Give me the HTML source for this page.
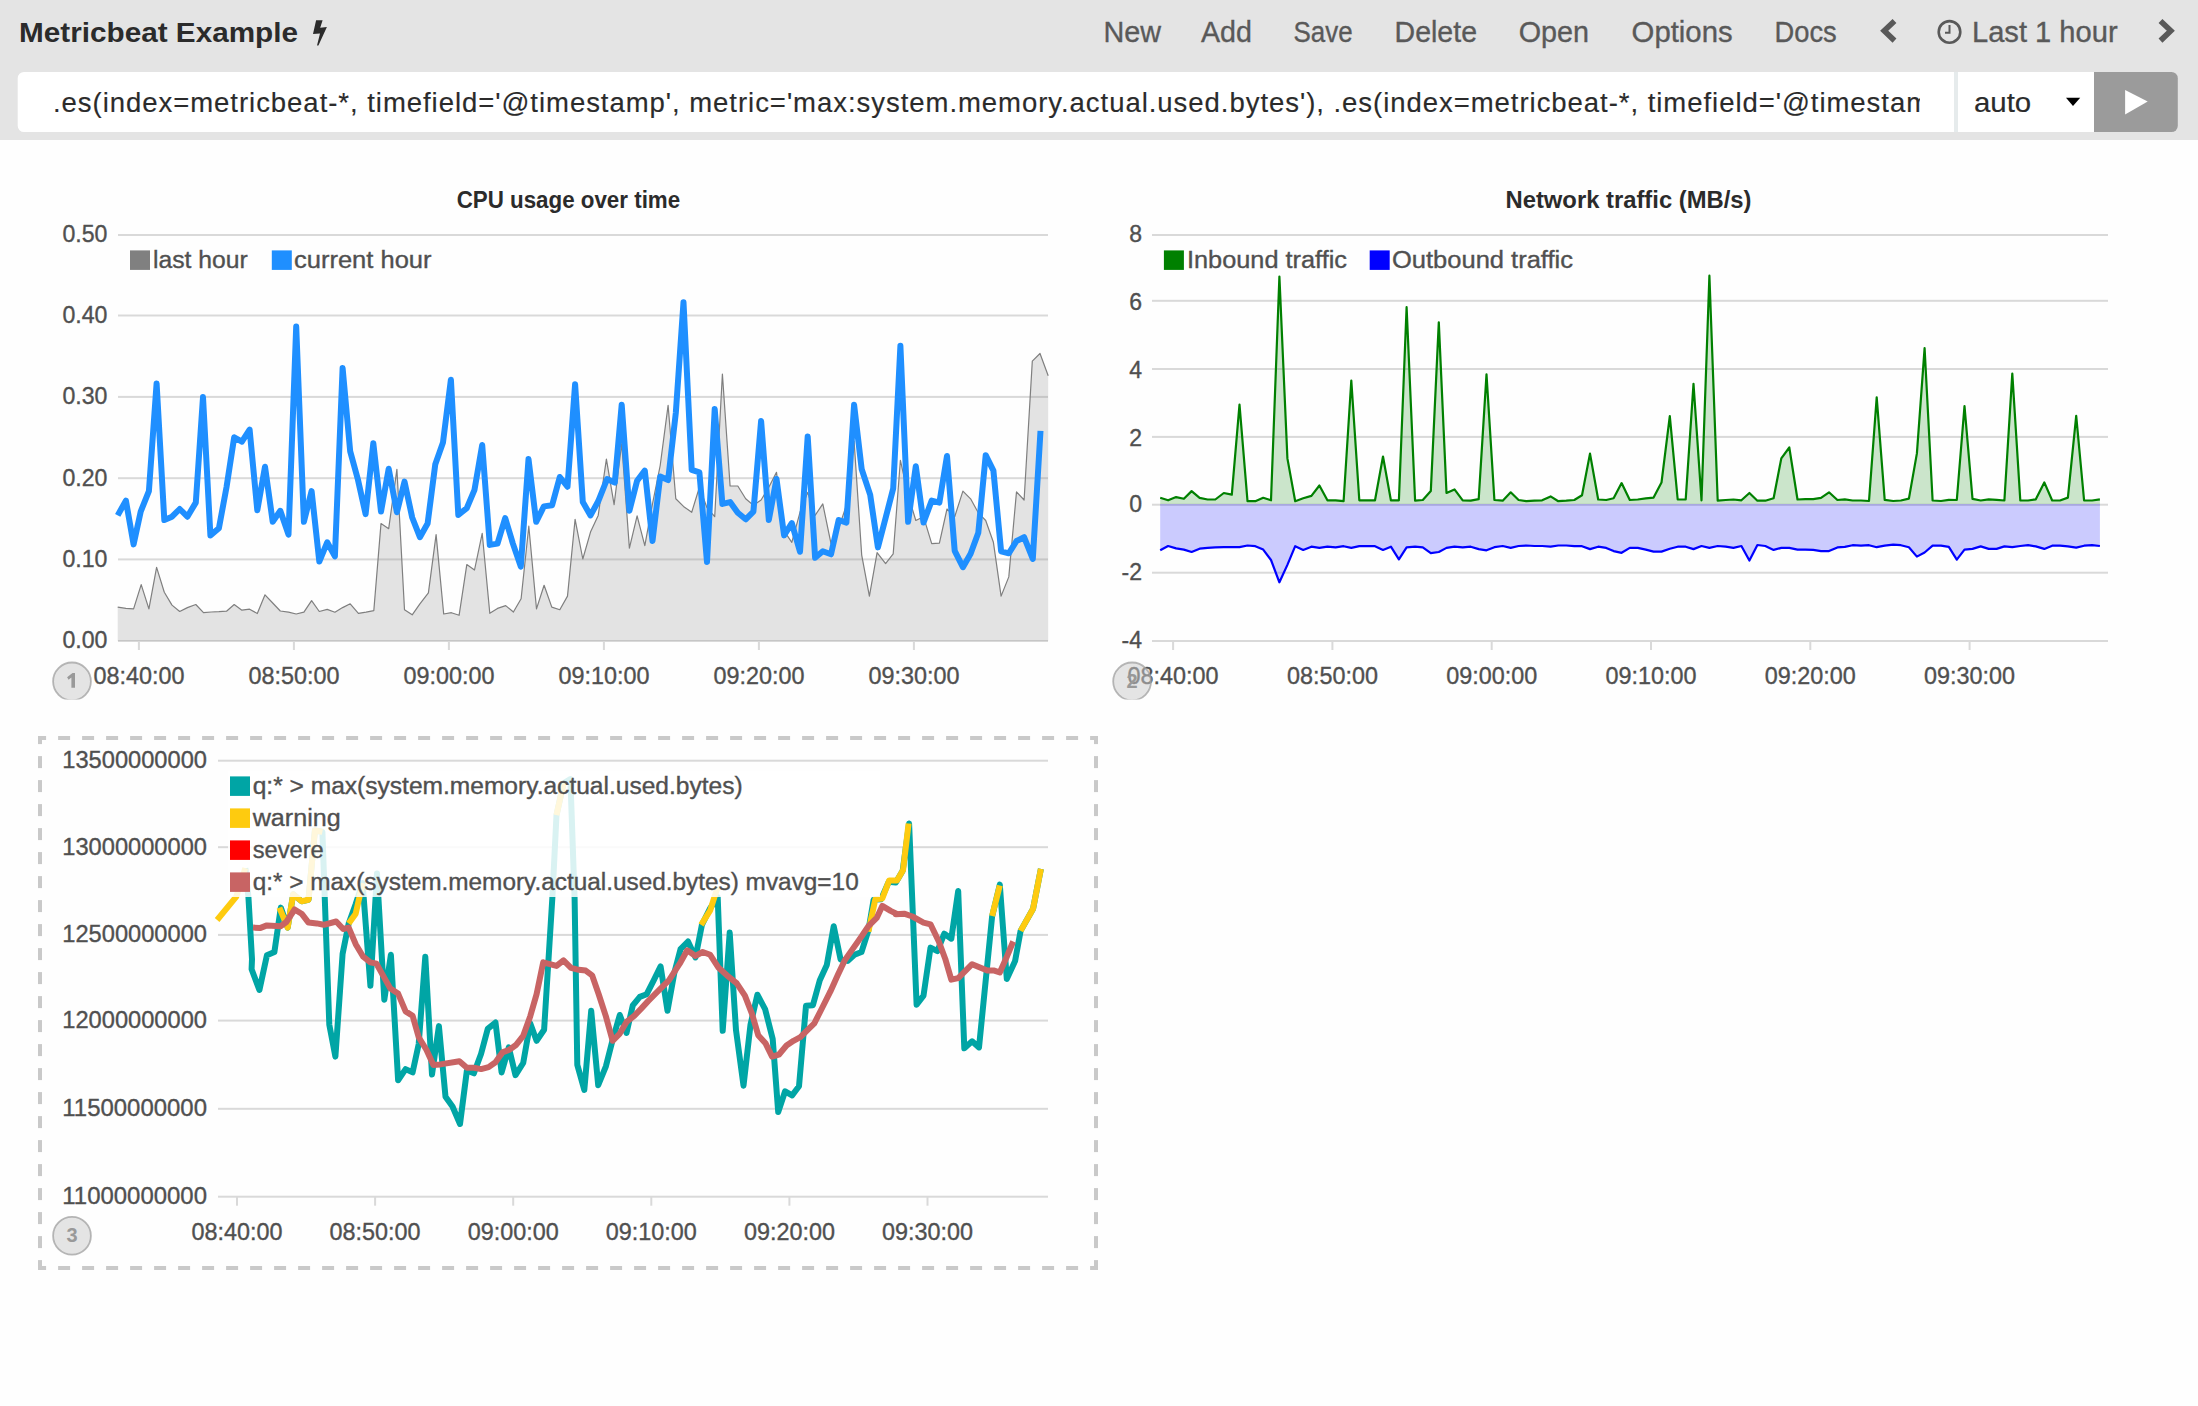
<!DOCTYPE html>
<html><head><meta charset="utf-8"><title>Timelion</title>
<style>
html,body{margin:0;padding:0;background:#fefefe;width:2198px;height:1406px;overflow:hidden;position:relative}
svg{display:block;font-family:"Liberation Sans", sans-serif}
</style></head><body>
<svg width="2198" height="1406" viewBox="0 0 2198 1406">
<rect x="0" y="0" width="2198" height="140" fill="#e4e4e4"/>
<text x="19" y="42" font-size="28" font-weight="bold" fill="#2b2b2b" text-anchor="start" textLength="279" lengthAdjust="spacingAndGlyphs">Metricbeat Example</text>
<polygon points="316.1,20.2 322.6,20.2 320.2,27.8 326.9,27.0 318.4,45.6 317.0,45.6 320.0,33.6 313.0,33.9" fill="#2b2b2b"/>
<text x="1103.4" y="42" font-size="29.5" font-weight="normal" fill="#595959" text-anchor="start" textLength="57.6" lengthAdjust="spacingAndGlyphs" stroke="#595959" stroke-width="0.35">New</text>
<text x="1201" y="42" font-size="29.5" font-weight="normal" fill="#595959" text-anchor="start" textLength="51" lengthAdjust="spacingAndGlyphs" stroke="#595959" stroke-width="0.35">Add</text>
<text x="1293.5" y="42" font-size="29.5" font-weight="normal" fill="#595959" text-anchor="start" textLength="59.1" lengthAdjust="spacingAndGlyphs" stroke="#595959" stroke-width="0.35">Save</text>
<text x="1394.6" y="42" font-size="29.5" font-weight="normal" fill="#595959" text-anchor="start" textLength="82.4" lengthAdjust="spacingAndGlyphs" stroke="#595959" stroke-width="0.35">Delete</text>
<text x="1518.7" y="42" font-size="29.5" font-weight="normal" fill="#595959" text-anchor="start" textLength="70.3" lengthAdjust="spacingAndGlyphs" stroke="#595959" stroke-width="0.35">Open</text>
<text x="1631.6" y="42" font-size="29.5" font-weight="normal" fill="#595959" text-anchor="start" textLength="101" lengthAdjust="spacingAndGlyphs" stroke="#595959" stroke-width="0.35">Options</text>
<text x="1774.5" y="42" font-size="29.5" font-weight="normal" fill="#595959" text-anchor="start" textLength="62.2" lengthAdjust="spacingAndGlyphs" stroke="#595959" stroke-width="0.35">Docs</text>
<text x="1972" y="42" font-size="29.5" font-weight="normal" fill="#595959" text-anchor="start" textLength="145.6" lengthAdjust="spacingAndGlyphs" stroke="#595959" stroke-width="0.35">Last 1 hour</text>
<polyline points="1894.5,21 1884.2,30.8 1894.5,40.6" fill="none" stroke="#595959" stroke-width="5.6" stroke-linecap="butt" stroke-linejoin="miter"/>
<polyline points="2160.5,21 2170.8,30.8 2160.5,40.6" fill="none" stroke="#595959" stroke-width="5.6" stroke-linecap="butt" stroke-linejoin="miter"/>
<circle cx="1949.5" cy="31.9" r="10.8" fill="none" stroke="#595959" stroke-width="2.6"/>
<polyline points="1949.5,25 1949.5,32.8 1945,32.8" fill="none" stroke="#595959" stroke-width="2"/>
<path d="M24,72 H1954 V132 H24 A6.3,6.3 0 0 1 17.7,125.7 V78.3 A6.3,6.3 0 0 1 24,72 Z" fill="#fff"/>
<rect x="1954" y="72" width="4" height="60" fill="#e6ebec"/>
<rect x="1958" y="72" width="136" height="60" fill="#fff"/>
<path d="M2094,72 H2171.5 A6.3,6.3 0 0 1 2177.8,78.3 V125.7 A6.3,6.3 0 0 1 2171.5,132 H2094 Z" fill="#9b9b9b"/>
<polygon points="2125.1,90 2147.7,101.6 2125.1,114.4" fill="#fff"/>
<polygon points="2066,97.7 2080.2,97.7 2073,105.9" fill="#000"/>
<text x="1973.9" y="111.7" font-size="27.5" font-weight="normal" fill="#2b2b2b" text-anchor="start" textLength="57.3" lengthAdjust="spacingAndGlyphs" stroke="#2b2b2b" stroke-width="0.15">auto</text>
<clipPath id="inclip"><rect x="18" y="72" width="1902" height="60"/></clipPath>
<text x="53" y="111.6" font-size="27.5" font-weight="normal" fill="#2b2b2b" text-anchor="start" stroke="#2b2b2b" stroke-width="0.15" clip-path="url(#inclip)" letter-spacing="0.96">.es(index=metricbeat-*, timefield='@timestamp', metric='max:system.memory.actual.used.bytes'), .es(index=metricbeat-*, timefield='@timestamp'</text>
<text x="568.4" y="208" font-size="23.5" font-weight="bold" fill="#2b2b2b" text-anchor="middle" textLength="223.5" lengthAdjust="spacingAndGlyphs">CPU usage over time</text>
<rect x="118" y="640.0" width="930" height="2" fill="#d9d9d9"/>
<text x="107.4" y="648.4" font-size="23" font-weight="normal" fill="#505050" text-anchor="end" textLength="45" lengthAdjust="spacingAndGlyphs" stroke="#505050" stroke-width="0.35">0.00</text>
<rect x="118" y="558.4" width="930" height="2" fill="#d9d9d9"/>
<text x="107.4" y="566.8" font-size="23" font-weight="normal" fill="#505050" text-anchor="end" textLength="45" lengthAdjust="spacingAndGlyphs" stroke="#505050" stroke-width="0.35">0.10</text>
<rect x="118" y="477.2" width="930" height="2" fill="#d9d9d9"/>
<text x="107.4" y="485.59999999999997" font-size="23" font-weight="normal" fill="#505050" text-anchor="end" textLength="45" lengthAdjust="spacingAndGlyphs" stroke="#505050" stroke-width="0.35">0.20</text>
<rect x="118" y="395.9" width="930" height="2" fill="#d9d9d9"/>
<text x="107.4" y="404.29999999999995" font-size="23" font-weight="normal" fill="#505050" text-anchor="end" textLength="45" lengthAdjust="spacingAndGlyphs" stroke="#505050" stroke-width="0.35">0.30</text>
<rect x="118" y="314.5" width="930" height="2" fill="#d9d9d9"/>
<text x="107.4" y="322.9" font-size="23" font-weight="normal" fill="#505050" text-anchor="end" textLength="45" lengthAdjust="spacingAndGlyphs" stroke="#505050" stroke-width="0.35">0.40</text>
<rect x="118" y="234.0" width="930" height="2" fill="#d9d9d9"/>
<text x="107.4" y="242.4" font-size="23" font-weight="normal" fill="#505050" text-anchor="end" textLength="45" lengthAdjust="spacingAndGlyphs" stroke="#505050" stroke-width="0.35">0.50</text>
<rect x="137.9" y="641" width="2" height="9" fill="#d9d9d9"/>
<text x="138.9" y="684.1" font-size="23.8" font-weight="normal" fill="#505050" text-anchor="middle" textLength="91" lengthAdjust="spacingAndGlyphs" stroke="#505050" stroke-width="0.35">08:40:00</text>
<rect x="292.9" y="641" width="2" height="9" fill="#d9d9d9"/>
<text x="293.9" y="684.1" font-size="23.8" font-weight="normal" fill="#505050" text-anchor="middle" textLength="91" lengthAdjust="spacingAndGlyphs" stroke="#505050" stroke-width="0.35">08:50:00</text>
<rect x="447.9" y="641" width="2" height="9" fill="#d9d9d9"/>
<text x="448.9" y="684.1" font-size="23.8" font-weight="normal" fill="#505050" text-anchor="middle" textLength="91" lengthAdjust="spacingAndGlyphs" stroke="#505050" stroke-width="0.35">09:00:00</text>
<rect x="602.9" y="641" width="2" height="9" fill="#d9d9d9"/>
<text x="603.9" y="684.1" font-size="23.8" font-weight="normal" fill="#505050" text-anchor="middle" textLength="91" lengthAdjust="spacingAndGlyphs" stroke="#505050" stroke-width="0.35">09:10:00</text>
<rect x="757.9" y="641" width="2" height="9" fill="#d9d9d9"/>
<text x="758.9" y="684.1" font-size="23.8" font-weight="normal" fill="#505050" text-anchor="middle" textLength="91" lengthAdjust="spacingAndGlyphs" stroke="#505050" stroke-width="0.35">09:20:00</text>
<rect x="912.9" y="641" width="2" height="9" fill="#d9d9d9"/>
<text x="913.9" y="684.1" font-size="23.8" font-weight="normal" fill="#505050" text-anchor="middle" textLength="91" lengthAdjust="spacingAndGlyphs" stroke="#505050" stroke-width="0.35">09:30:00</text>
<polygon points="117.7,641 117.7,607.1 125.9,608.4 133.6,608.9 141.2,584.6 148.9,608.9 156.6,567.4 164.3,592.3 172.0,605.1 179.7,611.5 187.4,607.6 195.8,604.5 203.5,612.7 211.2,612.0 218.9,611.7 226.5,611.2 234.2,604.5 241.9,610.2 249.6,609.2 257.3,613.5 265.0,594.8 272.7,603.0 280.3,611.0 288.5,612.2 296.2,614.0 303.9,612.2 311.6,600.7 319.3,611.5 327.2,609.4 334.9,612.2 342.6,607.6 350.2,603.8 358.4,613.3 366.1,612.2 373.8,610.7 381.0,523.6 388.7,528.7 396.9,469.3 404.5,609.7 412.2,614.8 419.9,603.8 428.4,592.8 436.1,534.6 443.7,614.0 451.4,612.7 459.1,615.3 466.8,564.6 474.5,570.0 482.2,533.3 489.8,613.3 497.5,608.4 505.7,605.6 513.4,612.0 521.1,598.7 528.8,526.2 536.5,608.9 544.1,585.3 551.8,607.1 559.8,609.7 567.5,596.1 575.1,519.3 582.8,559.0 590.5,532.1 598.2,515.4 606.4,459.1 614.1,504.7 621.7,443.7 629.4,548.2 637.1,515.9 644.8,545.6 652.5,503.9 660.2,465.5 668.1,405.3 675.8,498.8 683.5,506.4 691.7,512.3 699.4,487.2 707.0,507.7 714.7,516.7 722.4,374.0 730.1,486.0 737.8,486.0 745.7,498.8 753.4,505.2 761.1,500.0 768.8,487.2 776.5,472.4 784.1,530.8 791.8,542.3 800.0,512.3 807.7,492.4 815.1,515.4 822.8,503.9 831.0,543.6 838.7,528.2 846.4,505.2 854.1,441.1 861.7,555.1 869.4,596.1 877.1,552.6 885.6,563.6 893.2,553.8 900.4,460.3 908.1,494.9 915.8,520.5 923.5,516.7 931.7,543.6 939.4,543.1 947.0,509.0 954.7,516.7 962.9,491.1 970.6,498.8 978.3,512.8 985.7,520.5 993.4,542.3 1001.1,596.1 1008.8,576.9 1016.5,491.8 1024.1,500.0 1032.3,361.2 1040.0,353.5 1048.2,375.8 1048.2,641" fill="#808080" fill-opacity="0.21"/>
<polyline points="117.7,607.1 125.9,608.4 133.6,608.9 141.2,584.6 148.9,608.9 156.6,567.4 164.3,592.3 172.0,605.1 179.7,611.5 187.4,607.6 195.8,604.5 203.5,612.7 211.2,612.0 218.9,611.7 226.5,611.2 234.2,604.5 241.9,610.2 249.6,609.2 257.3,613.5 265.0,594.8 272.7,603.0 280.3,611.0 288.5,612.2 296.2,614.0 303.9,612.2 311.6,600.7 319.3,611.5 327.2,609.4 334.9,612.2 342.6,607.6 350.2,603.8 358.4,613.3 366.1,612.2 373.8,610.7 381.0,523.6 388.7,528.7 396.9,469.3 404.5,609.7 412.2,614.8 419.9,603.8 428.4,592.8 436.1,534.6 443.7,614.0 451.4,612.7 459.1,615.3 466.8,564.6 474.5,570.0 482.2,533.3 489.8,613.3 497.5,608.4 505.7,605.6 513.4,612.0 521.1,598.7 528.8,526.2 536.5,608.9 544.1,585.3 551.8,607.1 559.8,609.7 567.5,596.1 575.1,519.3 582.8,559.0 590.5,532.1 598.2,515.4 606.4,459.1 614.1,504.7 621.7,443.7 629.4,548.2 637.1,515.9 644.8,545.6 652.5,503.9 660.2,465.5 668.1,405.3 675.8,498.8 683.5,506.4 691.7,512.3 699.4,487.2 707.0,507.7 714.7,516.7 722.4,374.0 730.1,486.0 737.8,486.0 745.7,498.8 753.4,505.2 761.1,500.0 768.8,487.2 776.5,472.4 784.1,530.8 791.8,542.3 800.0,512.3 807.7,492.4 815.1,515.4 822.8,503.9 831.0,543.6 838.7,528.2 846.4,505.2 854.1,441.1 861.7,555.1 869.4,596.1 877.1,552.6 885.6,563.6 893.2,553.8 900.4,460.3 908.1,494.9 915.8,520.5 923.5,516.7 931.7,543.6 939.4,543.1 947.0,509.0 954.7,516.7 962.9,491.1 970.6,498.8 978.3,512.8 985.7,520.5 993.4,542.3 1001.1,596.1 1008.8,576.9 1016.5,491.8 1024.1,500.0 1032.3,361.2 1040.0,353.5 1048.2,375.8" fill="none" stroke="#7f7f7f" stroke-width="1.2" stroke-linejoin="round"/>
<polyline points="117.7,515.4 125.9,500.6 133.6,544.4 140.7,511.6 148.9,491.1 156.6,383.5 164.3,520.0 172.0,516.7 179.7,509.0 187.4,516.7 195.8,502.6 203.0,397.1 210.4,535.4 218.9,528.2 226.5,487.2 234.2,437.3 241.9,441.6 249.6,429.6 257.3,510.3 265.0,466.7 272.7,521.8 280.3,510.8 288.5,534.6 296.2,326.6 303.9,521.8 311.6,491.1 319.3,561.5 327.2,542.3 334.9,556.4 342.6,368.1 350.2,451.4 357.9,479.5 365.6,514.1 373.3,443.2 381.0,511.6 388.7,468.8 396.9,512.3 404.5,481.6 412.2,517.5 419.9,537.2 427.6,523.6 435.3,464.2 443.0,442.4 450.9,379.7 458.3,514.9 466.8,508.2 474.5,489.8 482.2,445.0 489.8,544.9 497.5,543.6 505.2,518.0 512.9,543.6 520.8,566.6 528.5,459.1 536.2,521.8 543.9,506.4 552.1,505.2 559.8,477.0 567.5,486.7 575.1,384.3 582.8,502.1 590.5,515.4 598.2,501.3 607.1,479.0 614.8,482.6 621.7,404.8 629.4,510.8 637.1,480.8 644.8,470.6 652.5,541.0 660.2,476.5 668.1,480.1 675.8,413.0 683.5,302.3 691.7,469.8 699.4,472.4 707.0,562.0 714.7,409.1 722.4,503.9 730.1,502.1 737.8,512.8 745.7,519.3 753.4,511.6 761.1,421.1 768.8,520.0 776.5,479.0 784.1,535.4 791.8,523.1 800.0,551.8 807.7,436.5 815.1,557.7 822.8,551.3 831.0,554.3 838.7,520.0 846.4,522.6 854.1,404.8 861.7,469.3 870.2,494.9 877.9,547.4 885.6,518.0 893.2,488.5 900.4,345.8 908.1,521.8 915.8,466.2 923.5,522.6 931.7,500.6 939.4,502.6 947.0,456.0 954.7,550.8 962.9,567.2 970.6,553.8 978.3,532.8 985.7,455.2 993.4,470.6 1001.1,551.3 1008.8,553.3 1016.5,541.0 1024.1,537.2 1032.8,559.0 1040.5,430.9" fill="none" stroke="#1f8fff" stroke-width="6" stroke-linejoin="round" stroke-linecap="butt"/>
<rect x="130" y="250.4" width="20" height="19.5" fill="#808080"/>
<text x="153" y="268" font-size="23" font-weight="normal" fill="#505050" text-anchor="start" textLength="94.7" lengthAdjust="spacingAndGlyphs" stroke="#505050" stroke-width="0.35">last hour</text>
<rect x="271.8" y="250.4" width="20" height="19.5" fill="#1f8fff"/>
<text x="294" y="268" font-size="23" font-weight="normal" fill="#505050" text-anchor="start" textLength="137.5" lengthAdjust="spacingAndGlyphs" stroke="#505050" stroke-width="0.35">current hour</text>
<clipPath id="bc1"><rect x="42" y="651.4" width="60" height="48.10000000000002"/></clipPath>
<g clip-path="url(#bc1)"><circle cx="72" cy="681.4" r="18.9" fill="#cacaca" fill-opacity="0.5" stroke="#a0a0a0" stroke-opacity="0.75" stroke-width="1.8"/>
<polygon points="72.5,673.0 75,673.0 75,687.8 71.4,687.8 71.4,677.5 68.6,679.8 67.1,677.1999999999999" fill="#999"/>
</g>
<text x="1628.5" y="208" font-size="23.5" font-weight="bold" fill="#2b2b2b" text-anchor="middle" textLength="246" lengthAdjust="spacingAndGlyphs">Network traffic (MB/s)</text>
<rect x="1152" y="234.0" width="956" height="2" fill="#d9d9d9"/>
<text x="1142" y="241.9" font-size="23" font-weight="normal" fill="#505050" text-anchor="end" stroke="#505050" stroke-width="0.35">8</text>
<rect x="1152" y="299.8" width="956" height="2" fill="#d9d9d9"/>
<text x="1142" y="310.2" font-size="23" font-weight="normal" fill="#505050" text-anchor="end" stroke="#505050" stroke-width="0.35">6</text>
<rect x="1152" y="368.0" width="956" height="2" fill="#d9d9d9"/>
<text x="1142" y="377.6" font-size="23" font-weight="normal" fill="#505050" text-anchor="end" stroke="#505050" stroke-width="0.35">4</text>
<rect x="1152" y="435.9" width="956" height="2" fill="#d9d9d9"/>
<text x="1142" y="445.5" font-size="23" font-weight="normal" fill="#505050" text-anchor="end" stroke="#505050" stroke-width="0.35">2</text>
<rect x="1152" y="503.7" width="956" height="2" fill="#d9d9d9"/>
<text x="1142" y="511.9" font-size="23" font-weight="normal" fill="#505050" text-anchor="end" stroke="#505050" stroke-width="0.35">0</text>
<rect x="1152" y="571.7" width="956" height="2" fill="#d9d9d9"/>
<text x="1142" y="579.8" font-size="23" font-weight="normal" fill="#505050" text-anchor="end" stroke="#505050" stroke-width="0.35">-2</text>
<rect x="1152" y="640.0" width="956" height="2" fill="#d9d9d9"/>
<text x="1142" y="647.6" font-size="23" font-weight="normal" fill="#505050" text-anchor="end" stroke="#505050" stroke-width="0.35">-4</text>
<polygon points="1160.2,504.7 1160.2,497.8 1168.1,500.3 1176.1,497.1 1183.9,498.8 1191.6,491.1 1199.6,497.8 1207.6,499.5 1215.3,499.5 1223.8,493.0 1231.8,494.7 1239.5,404.7 1247.5,501.2 1255.3,501.2 1263.2,497.8 1271.0,500.3 1279.4,276.5 1287.4,458.4 1295.2,501.2 1303.2,498.3 1311.4,495.9 1319.4,485.5 1327.4,500.3 1335.6,500.3 1343.6,501.2 1351.3,380.5 1359.3,500.3 1367.0,500.3 1375.0,500.3 1383.0,456.5 1390.9,500.3 1398.9,500.3 1406.6,307.2 1415.1,500.7 1422.8,500.0 1430.8,491.1 1438.8,322.4 1446.5,493.0 1454.5,489.4 1462.7,500.3 1470.7,500.7 1478.7,499.1 1486.5,374.4 1494.4,500.0 1502.7,500.7 1510.7,492.3 1518.6,500.0 1526.4,501.2 1534.4,500.7 1542.1,500.3 1550.6,496.4 1558.3,501.2 1566.3,500.7 1574.3,500.0 1582.0,495.2 1590.0,453.6 1598.2,499.5 1606.2,500.0 1613.6,498.3 1621.6,483.1 1629.8,500.0 1637.8,499.5 1645.8,498.3 1653.6,497.6 1661.5,482.6 1669.8,416.1 1677.7,499.5 1685.7,499.5 1693.5,383.9 1701.5,500.3 1709.4,275.7 1717.7,500.7 1725.7,500.0 1733.4,499.5 1741.4,500.3 1749.4,493.0 1757.4,500.7 1765.3,500.7 1773.6,498.3 1781.3,458.4 1789.3,447.5 1797.5,499.5 1805.3,499.1 1813.2,499.1 1821.0,497.8 1829.0,492.3 1837.4,500.0 1844.8,499.3 1852.6,500.5 1861.0,500.5 1869.0,501.0 1876.7,397.3 1884.7,499.8 1893.2,501.0 1900.9,500.5 1908.9,498.6 1916.9,453.4 1924.6,348.2 1932.6,500.5 1941.0,501.0 1948.8,499.8 1956.8,500.0 1964.5,406.2 1972.5,498.8 1980.7,500.5 1988.7,499.3 1996.6,499.8 2004.4,500.5 2012.3,373.6 2020.3,500.5 2028.1,500.5 2035.8,499.3 2044.3,482.4 2052.2,500.5 2060.0,500.5 2067.9,497.6 2076.2,415.9 2084.1,500.5 2092.1,500.5 2099.9,499.3 2099.9,504.7" fill="#008000" fill-opacity="0.2"/>
<polygon points="1160.2,504.7 1160.2,550.3 1168.1,546.0 1176.1,548.4 1183.9,549.6 1191.6,552.0 1199.6,548.7 1207.6,547.9 1215.3,547.4 1223.8,547.2 1231.8,547.2 1239.5,547.2 1247.5,545.5 1255.3,546.2 1263.2,549.6 1271.0,560.0 1279.4,582.3 1287.4,564.9 1295.2,546.2 1303.2,549.9 1311.4,546.7 1319.4,547.9 1327.4,546.7 1335.6,547.4 1343.6,546.2 1351.3,547.9 1359.3,546.2 1367.0,546.2 1375.0,546.2 1383.0,549.9 1390.9,546.7 1398.9,559.3 1406.6,547.4 1415.1,546.7 1422.8,547.4 1430.8,553.2 1438.8,552.0 1446.5,547.9 1454.5,546.7 1462.7,547.4 1470.7,546.7 1478.7,549.1 1486.5,550.3 1494.4,547.2 1502.7,546.0 1510.7,547.9 1518.6,546.0 1526.4,545.5 1534.4,546.0 1542.1,546.0 1550.6,546.7 1558.3,545.5 1566.3,545.5 1574.3,546.2 1582.0,546.2 1590.0,549.1 1598.2,546.7 1606.2,547.9 1613.6,551.1 1621.6,552.8 1629.8,547.9 1637.8,547.9 1645.8,549.6 1653.6,551.6 1661.5,551.6 1669.8,548.7 1677.7,546.7 1685.7,546.7 1693.5,549.1 1701.5,546.0 1709.4,547.9 1717.7,546.0 1725.7,546.7 1733.4,547.9 1741.4,546.0 1749.4,560.5 1757.4,545.0 1765.3,546.0 1773.6,549.9 1781.3,547.9 1789.3,547.9 1797.5,549.6 1805.3,549.6 1813.2,549.9 1821.0,551.1 1829.0,551.1 1837.4,547.4 1844.8,546.9 1852.6,545.2 1861.0,545.7 1869.0,545.2 1876.7,547.2 1884.7,545.7 1893.2,544.7 1900.9,545.2 1908.9,547.2 1916.9,556.6 1924.6,552.5 1932.6,545.7 1941.0,545.7 1948.8,546.9 1956.8,559.7 1964.5,549.6 1972.5,548.9 1980.7,546.4 1988.7,548.9 1996.6,548.9 2004.4,546.4 2012.3,547.2 2020.3,546.0 2028.1,545.2 2035.8,546.4 2044.3,548.9 2052.2,545.7 2060.0,545.7 2067.9,546.4 2076.2,547.6 2084.1,545.7 2092.1,545.2 2099.9,546.0 2099.9,504.7" fill="#0000ff" fill-opacity="0.2"/>
<line x1="1160.2" y1="504.7" x2="2099.9" y2="504.7" stroke="#a8a8e0" stroke-width="1.5"/>
<polyline points="1160.2,497.8 1168.1,500.3 1176.1,497.1 1183.9,498.8 1191.6,491.1 1199.6,497.8 1207.6,499.5 1215.3,499.5 1223.8,493.0 1231.8,494.7 1239.5,404.7 1247.5,501.2 1255.3,501.2 1263.2,497.8 1271.0,500.3 1279.4,276.5 1287.4,458.4 1295.2,501.2 1303.2,498.3 1311.4,495.9 1319.4,485.5 1327.4,500.3 1335.6,500.3 1343.6,501.2 1351.3,380.5 1359.3,500.3 1367.0,500.3 1375.0,500.3 1383.0,456.5 1390.9,500.3 1398.9,500.3 1406.6,307.2 1415.1,500.7 1422.8,500.0 1430.8,491.1 1438.8,322.4 1446.5,493.0 1454.5,489.4 1462.7,500.3 1470.7,500.7 1478.7,499.1 1486.5,374.4 1494.4,500.0 1502.7,500.7 1510.7,492.3 1518.6,500.0 1526.4,501.2 1534.4,500.7 1542.1,500.3 1550.6,496.4 1558.3,501.2 1566.3,500.7 1574.3,500.0 1582.0,495.2 1590.0,453.6 1598.2,499.5 1606.2,500.0 1613.6,498.3 1621.6,483.1 1629.8,500.0 1637.8,499.5 1645.8,498.3 1653.6,497.6 1661.5,482.6 1669.8,416.1 1677.7,499.5 1685.7,499.5 1693.5,383.9 1701.5,500.3 1709.4,275.7 1717.7,500.7 1725.7,500.0 1733.4,499.5 1741.4,500.3 1749.4,493.0 1757.4,500.7 1765.3,500.7 1773.6,498.3 1781.3,458.4 1789.3,447.5 1797.5,499.5 1805.3,499.1 1813.2,499.1 1821.0,497.8 1829.0,492.3 1837.4,500.0 1844.8,499.3 1852.6,500.5 1861.0,500.5 1869.0,501.0 1876.7,397.3 1884.7,499.8 1893.2,501.0 1900.9,500.5 1908.9,498.6 1916.9,453.4 1924.6,348.2 1932.6,500.5 1941.0,501.0 1948.8,499.8 1956.8,500.0 1964.5,406.2 1972.5,498.8 1980.7,500.5 1988.7,499.3 1996.6,499.8 2004.4,500.5 2012.3,373.6 2020.3,500.5 2028.1,500.5 2035.8,499.3 2044.3,482.4 2052.2,500.5 2060.0,500.5 2067.9,497.6 2076.2,415.9 2084.1,500.5 2092.1,500.5 2099.9,499.3" fill="none" stroke="#008000" stroke-width="2.2" stroke-linejoin="round"/>
<polyline points="1160.2,550.3 1168.1,546.0 1176.1,548.4 1183.9,549.6 1191.6,552.0 1199.6,548.7 1207.6,547.9 1215.3,547.4 1223.8,547.2 1231.8,547.2 1239.5,547.2 1247.5,545.5 1255.3,546.2 1263.2,549.6 1271.0,560.0 1279.4,582.3 1287.4,564.9 1295.2,546.2 1303.2,549.9 1311.4,546.7 1319.4,547.9 1327.4,546.7 1335.6,547.4 1343.6,546.2 1351.3,547.9 1359.3,546.2 1367.0,546.2 1375.0,546.2 1383.0,549.9 1390.9,546.7 1398.9,559.3 1406.6,547.4 1415.1,546.7 1422.8,547.4 1430.8,553.2 1438.8,552.0 1446.5,547.9 1454.5,546.7 1462.7,547.4 1470.7,546.7 1478.7,549.1 1486.5,550.3 1494.4,547.2 1502.7,546.0 1510.7,547.9 1518.6,546.0 1526.4,545.5 1534.4,546.0 1542.1,546.0 1550.6,546.7 1558.3,545.5 1566.3,545.5 1574.3,546.2 1582.0,546.2 1590.0,549.1 1598.2,546.7 1606.2,547.9 1613.6,551.1 1621.6,552.8 1629.8,547.9 1637.8,547.9 1645.8,549.6 1653.6,551.6 1661.5,551.6 1669.8,548.7 1677.7,546.7 1685.7,546.7 1693.5,549.1 1701.5,546.0 1709.4,547.9 1717.7,546.0 1725.7,546.7 1733.4,547.9 1741.4,546.0 1749.4,560.5 1757.4,545.0 1765.3,546.0 1773.6,549.9 1781.3,547.9 1789.3,547.9 1797.5,549.6 1805.3,549.6 1813.2,549.9 1821.0,551.1 1829.0,551.1 1837.4,547.4 1844.8,546.9 1852.6,545.2 1861.0,545.7 1869.0,545.2 1876.7,547.2 1884.7,545.7 1893.2,544.7 1900.9,545.2 1908.9,547.2 1916.9,556.6 1924.6,552.5 1932.6,545.7 1941.0,545.7 1948.8,546.9 1956.8,559.7 1964.5,549.6 1972.5,548.9 1980.7,546.4 1988.7,548.9 1996.6,548.9 2004.4,546.4 2012.3,547.2 2020.3,546.0 2028.1,545.2 2035.8,546.4 2044.3,548.9 2052.2,545.7 2060.0,545.7 2067.9,546.4 2076.2,547.6 2084.1,545.7 2092.1,545.2 2099.9,546.0" fill="none" stroke="#0000ff" stroke-width="2.2" stroke-linejoin="round"/>
<rect x="1172.1" y="641" width="2" height="9" fill="#d9d9d9"/>
<text x="1173.1" y="684.1" font-size="23.8" font-weight="normal" fill="#505050" text-anchor="middle" textLength="91" lengthAdjust="spacingAndGlyphs" stroke="#505050" stroke-width="0.35">08:40:00</text>
<rect x="1331.4" y="641" width="2" height="9" fill="#d9d9d9"/>
<text x="1332.3999999999999" y="684.1" font-size="23.8" font-weight="normal" fill="#505050" text-anchor="middle" textLength="91" lengthAdjust="spacingAndGlyphs" stroke="#505050" stroke-width="0.35">08:50:00</text>
<rect x="1490.7" y="641" width="2" height="9" fill="#d9d9d9"/>
<text x="1491.6999999999998" y="684.1" font-size="23.8" font-weight="normal" fill="#505050" text-anchor="middle" textLength="91" lengthAdjust="spacingAndGlyphs" stroke="#505050" stroke-width="0.35">09:00:00</text>
<rect x="1650.0" y="641" width="2" height="9" fill="#d9d9d9"/>
<text x="1651.0" y="684.1" font-size="23.8" font-weight="normal" fill="#505050" text-anchor="middle" textLength="91" lengthAdjust="spacingAndGlyphs" stroke="#505050" stroke-width="0.35">09:10:00</text>
<rect x="1809.3" y="641" width="2" height="9" fill="#d9d9d9"/>
<text x="1810.3" y="684.1" font-size="23.8" font-weight="normal" fill="#505050" text-anchor="middle" textLength="91" lengthAdjust="spacingAndGlyphs" stroke="#505050" stroke-width="0.35">09:20:00</text>
<rect x="1968.6" y="641" width="2" height="9" fill="#d9d9d9"/>
<text x="1969.6" y="684.1" font-size="23.8" font-weight="normal" fill="#505050" text-anchor="middle" textLength="91" lengthAdjust="spacingAndGlyphs" stroke="#505050" stroke-width="0.35">09:30:00</text>
<rect x="1163.9" y="250.4" width="20" height="19.5" fill="#008000"/>
<text x="1187" y="268" font-size="23" font-weight="normal" fill="#505050" text-anchor="start" textLength="160" lengthAdjust="spacingAndGlyphs" stroke="#505050" stroke-width="0.35">Inbound traffic</text>
<rect x="1369.7" y="250.4" width="20" height="19.5" fill="#0000ff"/>
<text x="1392" y="268" font-size="23" font-weight="normal" fill="#505050" text-anchor="start" textLength="181" lengthAdjust="spacingAndGlyphs" stroke="#505050" stroke-width="0.35">Outbound traffic</text>
<clipPath id="bc2"><rect x="1102.1" y="651.4" width="60" height="48.10000000000002"/></clipPath>
<g clip-path="url(#bc2)"><circle cx="1132.1" cy="681.4" r="18.9" fill="#cacaca" fill-opacity="0.5" stroke="#a0a0a0" stroke-opacity="0.75" stroke-width="1.8"/>
<text x="1132.1" y="687.8" font-size="20" font-weight="bold" fill="#999" text-anchor="middle">2</text>
</g>
<g fill="#c9c9c9"><rect x="38.0" y="736" width="8.1" height="4"/><rect x="38.0" y="1266" width="8.1" height="4"/><rect x="58.1" y="736" width="12.0" height="4"/><rect x="58.1" y="1266" width="12.0" height="4"/><rect x="82.1" y="736" width="12.0" height="4"/><rect x="82.1" y="1266" width="12.0" height="4"/><rect x="106.1" y="736" width="12.0" height="4"/><rect x="106.1" y="1266" width="12.0" height="4"/><rect x="130.1" y="736" width="12.0" height="4"/><rect x="130.1" y="1266" width="12.0" height="4"/><rect x="154.1" y="736" width="12.0" height="4"/><rect x="154.1" y="1266" width="12.0" height="4"/><rect x="178.1" y="736" width="12.0" height="4"/><rect x="178.1" y="1266" width="12.0" height="4"/><rect x="202.1" y="736" width="12.0" height="4"/><rect x="202.1" y="1266" width="12.0" height="4"/><rect x="226.1" y="736" width="12.0" height="4"/><rect x="226.1" y="1266" width="12.0" height="4"/><rect x="250.1" y="736" width="12.0" height="4"/><rect x="250.1" y="1266" width="12.0" height="4"/><rect x="274.1" y="736" width="12.0" height="4"/><rect x="274.1" y="1266" width="12.0" height="4"/><rect x="298.1" y="736" width="12.0" height="4"/><rect x="298.1" y="1266" width="12.0" height="4"/><rect x="322.1" y="736" width="12.0" height="4"/><rect x="322.1" y="1266" width="12.0" height="4"/><rect x="346.1" y="736" width="12.0" height="4"/><rect x="346.1" y="1266" width="12.0" height="4"/><rect x="370.1" y="736" width="12.0" height="4"/><rect x="370.1" y="1266" width="12.0" height="4"/><rect x="394.1" y="736" width="12.0" height="4"/><rect x="394.1" y="1266" width="12.0" height="4"/><rect x="418.1" y="736" width="12.0" height="4"/><rect x="418.1" y="1266" width="12.0" height="4"/><rect x="442.1" y="736" width="12.0" height="4"/><rect x="442.1" y="1266" width="12.0" height="4"/><rect x="466.1" y="736" width="12.0" height="4"/><rect x="466.1" y="1266" width="12.0" height="4"/><rect x="490.1" y="736" width="12.0" height="4"/><rect x="490.1" y="1266" width="12.0" height="4"/><rect x="514.1" y="736" width="12.0" height="4"/><rect x="514.1" y="1266" width="12.0" height="4"/><rect x="538.1" y="736" width="12.0" height="4"/><rect x="538.1" y="1266" width="12.0" height="4"/><rect x="562.1" y="736" width="12.0" height="4"/><rect x="562.1" y="1266" width="12.0" height="4"/><rect x="586.1" y="736" width="12.0" height="4"/><rect x="586.1" y="1266" width="12.0" height="4"/><rect x="610.1" y="736" width="12.0" height="4"/><rect x="610.1" y="1266" width="12.0" height="4"/><rect x="634.1" y="736" width="12.0" height="4"/><rect x="634.1" y="1266" width="12.0" height="4"/><rect x="658.1" y="736" width="12.0" height="4"/><rect x="658.1" y="1266" width="12.0" height="4"/><rect x="682.1" y="736" width="12.0" height="4"/><rect x="682.1" y="1266" width="12.0" height="4"/><rect x="706.1" y="736" width="12.0" height="4"/><rect x="706.1" y="1266" width="12.0" height="4"/><rect x="730.1" y="736" width="12.0" height="4"/><rect x="730.1" y="1266" width="12.0" height="4"/><rect x="754.1" y="736" width="12.0" height="4"/><rect x="754.1" y="1266" width="12.0" height="4"/><rect x="778.1" y="736" width="12.0" height="4"/><rect x="778.1" y="1266" width="12.0" height="4"/><rect x="802.1" y="736" width="12.0" height="4"/><rect x="802.1" y="1266" width="12.0" height="4"/><rect x="826.1" y="736" width="12.0" height="4"/><rect x="826.1" y="1266" width="12.0" height="4"/><rect x="850.1" y="736" width="12.0" height="4"/><rect x="850.1" y="1266" width="12.0" height="4"/><rect x="874.1" y="736" width="12.0" height="4"/><rect x="874.1" y="1266" width="12.0" height="4"/><rect x="898.1" y="736" width="12.0" height="4"/><rect x="898.1" y="1266" width="12.0" height="4"/><rect x="922.1" y="736" width="12.0" height="4"/><rect x="922.1" y="1266" width="12.0" height="4"/><rect x="946.1" y="736" width="12.0" height="4"/><rect x="946.1" y="1266" width="12.0" height="4"/><rect x="970.1" y="736" width="12.0" height="4"/><rect x="970.1" y="1266" width="12.0" height="4"/><rect x="994.1" y="736" width="12.0" height="4"/><rect x="994.1" y="1266" width="12.0" height="4"/><rect x="1018.1" y="736" width="12.0" height="4"/><rect x="1018.1" y="1266" width="12.0" height="4"/><rect x="1042.1" y="736" width="12.0" height="4"/><rect x="1042.1" y="1266" width="12.0" height="4"/><rect x="1066.1" y="736" width="12.0" height="4"/><rect x="1066.1" y="1266" width="12.0" height="4"/><rect x="1090.1" y="736" width="7.9" height="4"/><rect x="1090.1" y="1266" width="7.9" height="4"/><rect x="38" y="736.0" width="4" height="8.1"/><rect x="1094" y="736.0" width="4" height="8.1"/><rect x="38" y="756.1" width="4" height="12.0"/><rect x="1094" y="756.1" width="4" height="12.0"/><rect x="38" y="780.1" width="4" height="12.0"/><rect x="1094" y="780.1" width="4" height="12.0"/><rect x="38" y="804.1" width="4" height="12.0"/><rect x="1094" y="804.1" width="4" height="12.0"/><rect x="38" y="828.1" width="4" height="12.0"/><rect x="1094" y="828.1" width="4" height="12.0"/><rect x="38" y="852.1" width="4" height="12.0"/><rect x="1094" y="852.1" width="4" height="12.0"/><rect x="38" y="876.1" width="4" height="12.0"/><rect x="1094" y="876.1" width="4" height="12.0"/><rect x="38" y="900.1" width="4" height="12.0"/><rect x="1094" y="900.1" width="4" height="12.0"/><rect x="38" y="924.1" width="4" height="12.0"/><rect x="1094" y="924.1" width="4" height="12.0"/><rect x="38" y="948.1" width="4" height="12.0"/><rect x="1094" y="948.1" width="4" height="12.0"/><rect x="38" y="972.1" width="4" height="12.0"/><rect x="1094" y="972.1" width="4" height="12.0"/><rect x="38" y="996.1" width="4" height="12.0"/><rect x="1094" y="996.1" width="4" height="12.0"/><rect x="38" y="1020.1" width="4" height="12.0"/><rect x="1094" y="1020.1" width="4" height="12.0"/><rect x="38" y="1044.1" width="4" height="12.0"/><rect x="1094" y="1044.1" width="4" height="12.0"/><rect x="38" y="1068.1" width="4" height="12.0"/><rect x="1094" y="1068.1" width="4" height="12.0"/><rect x="38" y="1092.1" width="4" height="12.0"/><rect x="1094" y="1092.1" width="4" height="12.0"/><rect x="38" y="1116.1" width="4" height="12.0"/><rect x="1094" y="1116.1" width="4" height="12.0"/><rect x="38" y="1140.1" width="4" height="12.0"/><rect x="1094" y="1140.1" width="4" height="12.0"/><rect x="38" y="1164.1" width="4" height="12.0"/><rect x="1094" y="1164.1" width="4" height="12.0"/><rect x="38" y="1188.1" width="4" height="12.0"/><rect x="1094" y="1188.1" width="4" height="12.0"/><rect x="38" y="1212.1" width="4" height="12.0"/><rect x="1094" y="1212.1" width="4" height="12.0"/><rect x="38" y="1236.1" width="4" height="12.0"/><rect x="1094" y="1236.1" width="4" height="12.0"/><rect x="38" y="1260.1" width="4" height="9.9"/><rect x="1094" y="1260.1" width="4" height="9.9"/></g>
<rect x="218" y="1195.7" width="830" height="2" fill="#d9d9d9"/>
<text x="207" y="1204.1000000000001" font-size="23" font-weight="normal" fill="#505050" text-anchor="end" textLength="144.7" lengthAdjust="spacingAndGlyphs" stroke="#505050" stroke-width="0.35">11000000000</text>
<rect x="218" y="1107.8" width="830" height="2" fill="#d9d9d9"/>
<text x="207" y="1116.2" font-size="23" font-weight="normal" fill="#505050" text-anchor="end" textLength="144.7" lengthAdjust="spacingAndGlyphs" stroke="#505050" stroke-width="0.35">11500000000</text>
<rect x="218" y="1019.6" width="830" height="2" fill="#d9d9d9"/>
<text x="207" y="1028.0" font-size="23" font-weight="normal" fill="#505050" text-anchor="end" textLength="144.7" lengthAdjust="spacingAndGlyphs" stroke="#505050" stroke-width="0.35">12000000000</text>
<rect x="218" y="933.9" width="830" height="2" fill="#d9d9d9"/>
<text x="207" y="942.3" font-size="23" font-weight="normal" fill="#505050" text-anchor="end" textLength="144.7" lengthAdjust="spacingAndGlyphs" stroke="#505050" stroke-width="0.35">12500000000</text>
<rect x="218" y="846.2" width="830" height="2" fill="#d9d9d9"/>
<text x="207" y="854.6" font-size="23" font-weight="normal" fill="#505050" text-anchor="end" textLength="144.7" lengthAdjust="spacingAndGlyphs" stroke="#505050" stroke-width="0.35">13000000000</text>
<rect x="218" y="759.7" width="830" height="2" fill="#d9d9d9"/>
<text x="207" y="768.1" font-size="23" font-weight="normal" fill="#505050" text-anchor="end" textLength="144.7" lengthAdjust="spacingAndGlyphs" stroke="#505050" stroke-width="0.35">13500000000</text>
<rect x="236.0" y="1196.7" width="2" height="9" fill="#d9d9d9"/>
<text x="237.0" y="1239.8" font-size="23.8" font-weight="normal" fill="#505050" text-anchor="middle" textLength="91" lengthAdjust="spacingAndGlyphs" stroke="#505050" stroke-width="0.35">08:40:00</text>
<rect x="374.1" y="1196.7" width="2" height="9" fill="#d9d9d9"/>
<text x="375.1" y="1239.8" font-size="23.8" font-weight="normal" fill="#505050" text-anchor="middle" textLength="91" lengthAdjust="spacingAndGlyphs" stroke="#505050" stroke-width="0.35">08:50:00</text>
<rect x="512.2" y="1196.7" width="2" height="9" fill="#d9d9d9"/>
<text x="513.2" y="1239.8" font-size="23.8" font-weight="normal" fill="#505050" text-anchor="middle" textLength="91" lengthAdjust="spacingAndGlyphs" stroke="#505050" stroke-width="0.35">09:00:00</text>
<rect x="650.3" y="1196.7" width="2" height="9" fill="#d9d9d9"/>
<text x="651.3" y="1239.8" font-size="23.8" font-weight="normal" fill="#505050" text-anchor="middle" textLength="91" lengthAdjust="spacingAndGlyphs" stroke="#505050" stroke-width="0.35">09:10:00</text>
<rect x="788.4" y="1196.7" width="2" height="9" fill="#d9d9d9"/>
<text x="789.4" y="1239.8" font-size="23.8" font-weight="normal" fill="#505050" text-anchor="middle" textLength="91" lengthAdjust="spacingAndGlyphs" stroke="#505050" stroke-width="0.35">09:20:00</text>
<rect x="926.5" y="1196.7" width="2" height="9" fill="#d9d9d9"/>
<text x="927.5" y="1239.8" font-size="23.8" font-weight="normal" fill="#505050" text-anchor="middle" textLength="91" lengthAdjust="spacingAndGlyphs" stroke="#505050" stroke-width="0.35">09:30:00</text>
<polyline points="245.3,868.1 248.4,896.6 252.0,959.1 251.6,969.2 259.4,990.0 266.9,955.3 274.4,952.0 280.8,907.6 287.7,927.6 293.2,894.3 301.6,901.2 308.5,899.8 314.9,830.5 322.4,831.9 329.3,1024.7 335.4,1056.6 342.6,953.9 348.7,923.4 355.7,904.0 362.6,883.2 370.4,985.8 377.0,873.5 384.3,999.7 390.9,954.8 398.1,1080.2 405.6,1069.1 412.6,1072.4 418.7,1044.1 425.3,956.7 432.0,1074.6 438.9,1026.1 445.5,1096.8 452.5,1106.5 460.0,1124.0 466.9,1070.5 473.9,1073.3 481.1,1053.8 487.7,1028.9 495.5,1022.5 501.6,1072.4 508.8,1047.4 515.5,1075.2 523.2,1063.0 530.2,1023.3 536.6,1040.8 544.1,1029.7 552.4,897.1 556.5,815.2 563.5,783.3 570.4,779.1 574.6,898.4 577.3,1064.9 584.3,1089.9 591.2,1010.8 598.2,1085.2 605.9,1066.3 612.6,1040.0 619.8,1015.0 626.5,1033.0 632.8,1005.3 639.8,996.9 646.7,994.2 653.7,980.3 660.6,966.4 667.5,1010.8 674.5,972.0 680.5,949.2 688.0,941.5 695.5,957.5 701.9,924.8 710.2,908.2 717.7,897.1 722.7,1030.8 729.7,932.6 736.0,1030.2 743.5,1085.7 750.5,1024.7 757.4,994.7 765.2,1009.4 772.7,1039.1 778.2,1112.1 785.1,1091.3 792.1,1095.4 799.0,1086.3 806.0,1005.8 812.9,1005.3 819.8,980.3 826.8,965.0 833.7,926.2 840.6,959.5 847.6,960.9 854.5,954.8 861.5,952.0 868.4,930.4 873.6,899.8 881.1,899.3 888.8,881.8 895.8,882.6 902.7,870.7 909.1,823.5 916.6,1004.7 923.5,995.6 930.5,947.6 937.4,951.2 944.3,933.7 951.3,938.7 958.2,891.0 964.3,1048.3 972.1,1041.3 979.0,1047.4 992.1,916.5 999.8,884.6 1006.8,978.9 1015.1,960.9 1020.6,930.9 1033.1,908.7 1040.9,868.8" fill="none" stroke="#00a5a5" stroke-width="6" stroke-linejoin="round" stroke-linecap="butt"/>
<polyline points="217.1,920.0 236.3,896.6 245.3,868.1" fill="none" stroke="#fecb0f" stroke-width="6" stroke-linejoin="round" stroke-linecap="butt"/>
<polyline points="279.4,907.6 287.7,927.6 293.2,894.3 301.6,901.2 308.5,899.8 314.9,830.5 322.4,831.9" fill="none" stroke="#fecb0f" stroke-width="6" stroke-linejoin="round" stroke-linecap="butt"/>
<polyline points="348.7,923.4 355.7,913.7 362.6,883.2" fill="none" stroke="#fecb0f" stroke-width="6" stroke-linejoin="round" stroke-linecap="butt"/>
<polyline points="556.5,815.2 563.5,783.3" fill="none" stroke="#fecb0f" stroke-width="6" stroke-linejoin="round" stroke-linecap="butt"/>
<polyline points="701.1,924.8 710.2,910.4 714.4,897.1 717.7,887.3" fill="none" stroke="#fecb0f" stroke-width="6" stroke-linejoin="round" stroke-linecap="butt"/>
<polyline points="868.4,931.7 875.3,899.3 882.3,898.4 889.2,880.4 897.0,880.4 903.1,869.9 908.6,823.5" fill="none" stroke="#fecb0f" stroke-width="6" stroke-linejoin="round" stroke-linecap="butt"/>
<polyline points="992.1,915.9 999.8,885.4" fill="none" stroke="#fecb0f" stroke-width="6" stroke-linejoin="round" stroke-linecap="butt"/>
<polyline points="1020.6,930.9 1033.1,908.7 1040.9,868.8" fill="none" stroke="#fecb0f" stroke-width="6" stroke-linejoin="round" stroke-linecap="butt"/>
<polyline points="253.0,927.6 259.9,928.1 266.9,925.4 280.8,926.2 286.3,922.0 294.6,909.5 301.6,913.7 308.5,922.6 316.8,923.4 323.8,924.8 336.2,921.5 343.2,929.0 348.7,927.6 355.7,944.2 363.2,956.7 370.4,962.3 376.5,963.7 383.4,976.1 390.4,988.6 398.1,993.6 405.6,1011.4 412.6,1015.8 418.7,1037.2 426.4,1049.7 433.4,1064.9 440.3,1064.4 459.4,1061.3 466.9,1067.7 473.9,1067.7 481.1,1069.1 488.6,1067.1 495.5,1062.2 502.4,1052.4 509.4,1049.7 516.3,1044.7 523.2,1035.8 530.2,1016.4 536.6,994.2 543.2,962.3 556.5,965.9 563.5,960.3 571.0,967.8 578.7,969.8 585.7,970.6 592.1,975.3 598.7,994.2 605.9,1016.4 612.6,1040.8 619.8,1033.6 626.5,1021.9 634.2,1015.8 641.2,1008.6 648.1,1001.1 655.0,994.2 662.0,987.2 668.9,980.3 679.7,963.7 687.2,950.3 695.5,955.9 702.7,952.0 710.2,954.8 718.6,967.8 726.9,975.3 736.6,983.1 744.9,995.6 751.9,1013.6 758.2,1035.2 765.7,1043.6 772.1,1056.6 778.8,1054.7 786.5,1045.5 793.5,1040.8 800.4,1037.2 807.9,1029.7 814.3,1023.3 822.1,1008.0 830.4,991.4 837.9,974.8 844.8,960.3 853.1,948.4 861.5,936.5 868.4,926.2 876.7,917.9 882.3,905.9 890.6,910.9 897.5,914.3 895.8,914.3 904.1,913.7 912.4,916.5 923.5,922.6 930.5,924.3 938.8,941.5 945.2,958.7 951.3,979.7 958.2,978.1 972.1,964.2 987.3,970.6 994.3,970.6 999.8,972.5 1006.8,956.7 1013.2,941.5" fill="none" stroke="#c86464" stroke-width="6" stroke-linejoin="round" stroke-linecap="butt"/>
<rect x="228" y="771" width="652" height="126" fill="#fff" fill-opacity="0.85"/>
<rect x="230" y="776.4" width="20" height="19.5" fill="#00a5a5"/>
<text x="252.7" y="794.1999999999999" font-size="23" font-weight="normal" fill="#505050" text-anchor="start" textLength="490" lengthAdjust="spacingAndGlyphs" stroke="#505050" stroke-width="0.35">q:* &gt; max(system.memory.actual.used.bytes)</text>
<rect x="230" y="808.4" width="20" height="19.5" fill="#fecb0f"/>
<text x="252.7" y="826.1999999999999" font-size="23" font-weight="normal" fill="#505050" text-anchor="start" textLength="88" lengthAdjust="spacingAndGlyphs" stroke="#505050" stroke-width="0.35">warning</text>
<rect x="230" y="840.4" width="20" height="19.5" fill="#ff0000"/>
<text x="252.7" y="858.1999999999999" font-size="23" font-weight="normal" fill="#505050" text-anchor="start" textLength="71" lengthAdjust="spacingAndGlyphs" stroke="#505050" stroke-width="0.35">severe</text>
<rect x="230" y="872.4" width="20" height="19.5" fill="#c86464"/>
<text x="252.7" y="890.1999999999999" font-size="23" font-weight="normal" fill="#505050" text-anchor="start" textLength="606" lengthAdjust="spacingAndGlyphs" stroke="#505050" stroke-width="0.35">q:* &gt; max(system.memory.actual.used.bytes) mvavg=10</text>
<clipPath id="bc3"><rect x="42" y="1205.7" width="60" height="94.29999999999995"/></clipPath>
<g clip-path="url(#bc3)"><circle cx="72" cy="1235.7" r="18.9" fill="#cacaca" fill-opacity="0.5" stroke="#a0a0a0" stroke-opacity="0.75" stroke-width="1.8"/>
<text x="72" y="1242.1000000000001" font-size="20" font-weight="bold" fill="#999" text-anchor="middle">3</text>
</g>
</svg></body></html>
